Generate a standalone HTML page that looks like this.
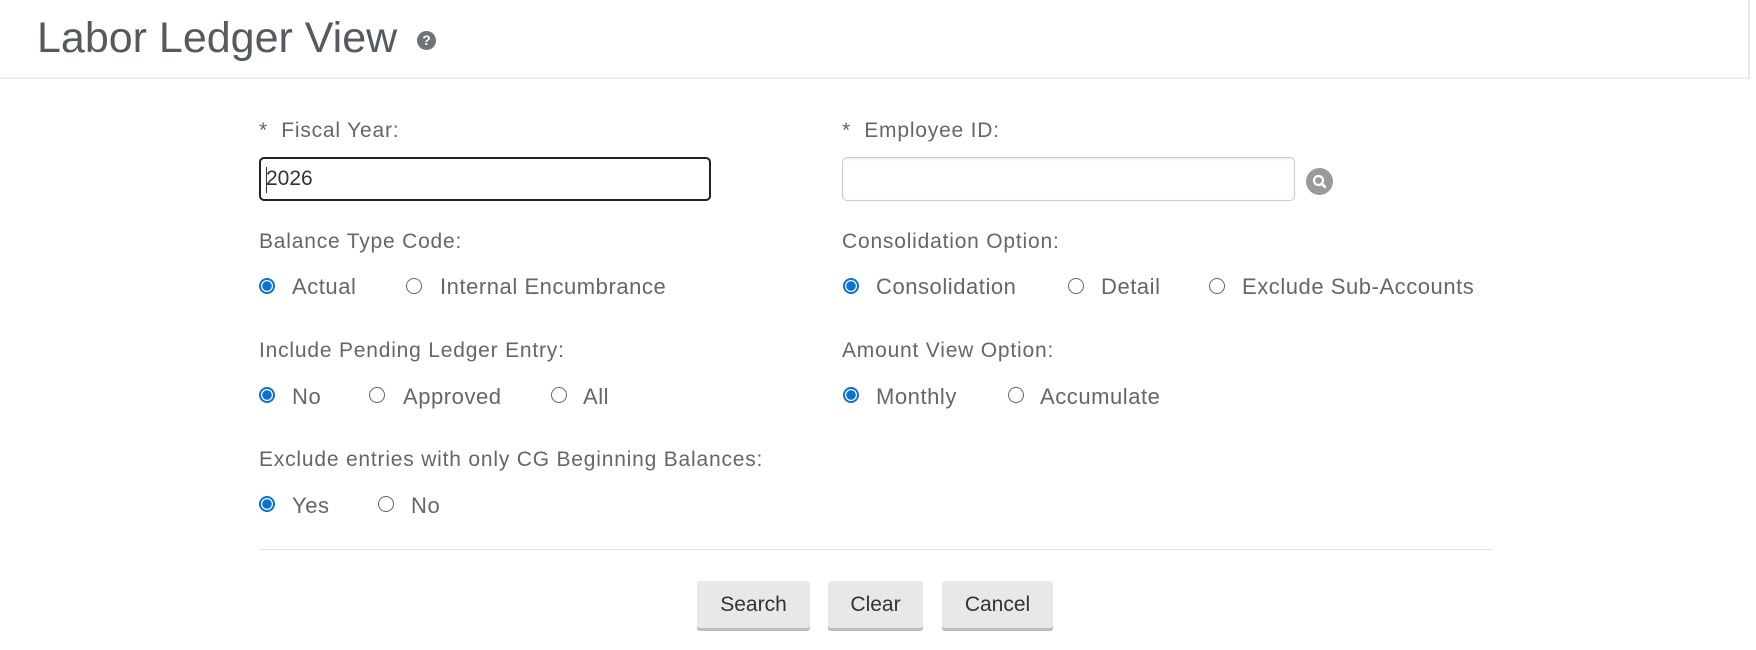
<!DOCTYPE html>
<html><head><meta charset="utf-8"><style>
body{margin:0;width:1756px;height:650px;background:#fff;font-family:"Liberation Sans",sans-serif;color:#666;position:relative;overflow:hidden}
.a{position:absolute;white-space:nowrap}
.hdr{position:absolute;left:0;top:0;width:1748px;height:77px;border-bottom:2px solid #eee;border-right:2px solid #e6e6e6}
.title{left:37px;top:14px;font-size:43px;color:#555a5e;font-weight:300}
.help{left:417px;top:31px;width:19px;height:19px;border-radius:50%;background:#6d7478;color:#fff;font-size:14px;font-weight:bold;text-align:center;line-height:19px}
.lbl{font-size:21px;color:#666;letter-spacing:.8px}
.inp{position:absolute;height:44px;border-radius:5px;box-sizing:border-box}
.r{position:absolute;width:16px;height:16px;border-radius:50%;box-sizing:border-box;border:1.5px solid #666;background:#fff}
.r.on{border:2px solid #0b72d1;background:radial-gradient(circle,#0b72d1 0 4.5px,#fff 5px)}
.t{font-size:22px;color:#666;letter-spacing:.55px}
.btn{position:absolute;top:581px;height:47px;background:#e8e8e8;border-radius:3px;box-shadow:0 3px 0 #bdbdbd;font-size:21px;color:#333;text-align:center;line-height:47px}
</style></head><body>
<div class="hdr"></div>
<div class="a title">Labor Ledger View</div>
<div class="a help">?</div>

<div class="a lbl" style="left:259px;top:119px">*&nbsp; Fiscal Year:</div>
<div class="inp" style="left:259px;top:157px;width:452px;border:2.5px solid #222"></div>
<div class="a" style="left:266px;top:167px;font-size:21px;color:#333">2026</div>
<div class="a" style="left:266px;top:167px;width:1px;height:26px;background:#333"></div>

<div class="a lbl" style="left:842px;top:119px">*&nbsp; Employee ID:</div>
<div class="inp" style="left:842px;top:157px;width:453px;border:1px solid #ccc;box-shadow:inset 0 1px 2px rgba(0,0,0,.08)"></div>
<svg class="a" style="left:1306px;top:168px" width="27" height="27" viewBox="0 0 27 27"><circle cx="13.5" cy="13.5" r="13.5" fill="#9a9a9a"/><circle cx="12.5" cy="12.5" r="4.5" fill="none" stroke="#fff" stroke-width="2.2"/><line x1="15.8" y1="15.8" x2="19" y2="19" stroke="#fff" stroke-width="2.6" stroke-linecap="round"/></svg>

<div class="a lbl" style="left:259px;top:230px">Balance Type Code:</div>
<div class="r on" style="left:259px;top:278px"></div><div class="a t" style="left:292px;top:274px">Actual</div>
<div class="r" style="left:406px;top:278px"></div><div class="a t" style="left:440px;top:274px">Internal Encumbrance</div>

<div class="a lbl" style="left:842px;top:230px">Consolidation Option:</div>
<div class="r on" style="left:843px;top:278px"></div><div class="a t" style="left:876px;top:274px">Consolidation</div>
<div class="r" style="left:1068px;top:278px"></div><div class="a t" style="left:1101px;top:274px">Detail</div>
<div class="r" style="left:1209px;top:278px"></div><div class="a t" style="left:1242px;top:274px">Exclude Sub-Accounts</div>

<div class="a lbl" style="left:259px;top:339px">Include Pending Ledger Entry:</div>
<div class="r on" style="left:259px;top:387px"></div><div class="a t" style="left:292px;top:384px">No</div>
<div class="r" style="left:369px;top:387px"></div><div class="a t" style="left:403px;top:384px">Approved</div>
<div class="r" style="left:551px;top:387px"></div><div class="a t" style="left:583px;top:384px">All</div>

<div class="a lbl" style="left:842px;top:339px">Amount View Option:</div>
<div class="r on" style="left:843px;top:387px"></div><div class="a t" style="left:876px;top:384px">Monthly</div>
<div class="r" style="left:1008px;top:387px"></div><div class="a t" style="left:1040px;top:384px">Accumulate</div>

<div class="a lbl" style="left:259px;top:448px">Exclude entries with only CG Beginning Balances:</div>
<div class="r on" style="left:259px;top:496px"></div><div class="a t" style="left:292px;top:493px">Yes</div>
<div class="r" style="left:378px;top:496px"></div><div class="a t" style="left:411px;top:493px">No</div>

<div class="a" style="left:259px;top:549px;width:1233px;height:1px;background:#e3e3e3"></div>

<div class="btn" style="left:697px;width:113px">Search</div>
<div class="btn" style="left:828px;width:95px">Clear</div>
<div class="btn" style="left:942px;width:111px">Cancel</div>
</body></html>
